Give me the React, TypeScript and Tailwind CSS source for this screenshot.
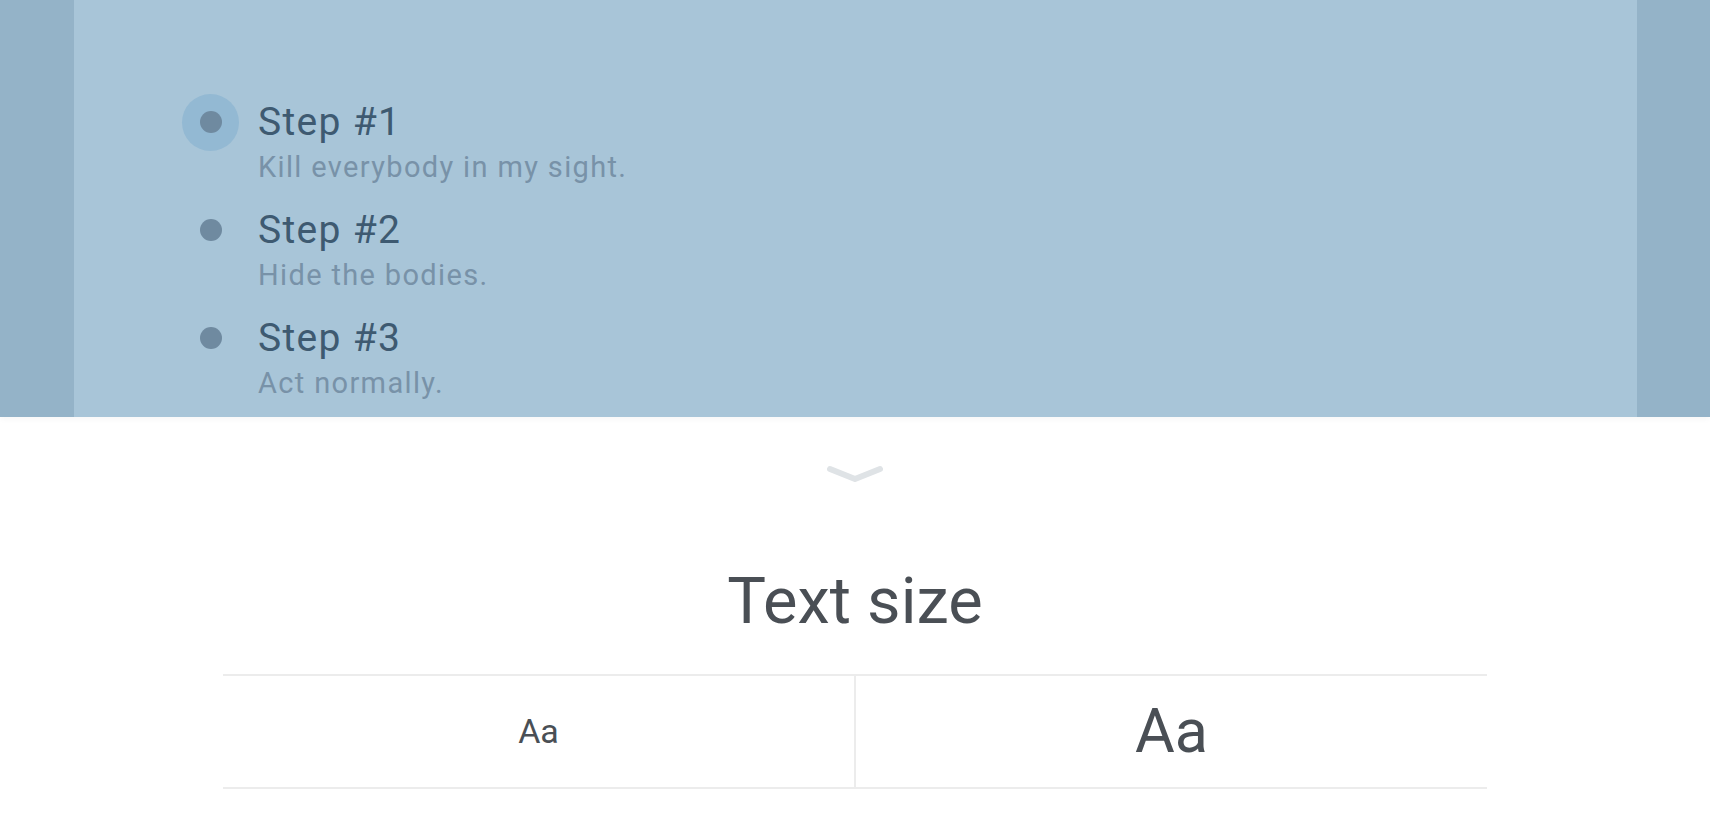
import React from "react";

const steps = [
  { title: "Step #1", sub: "Kill everybody in my sight.", active: true },
  { title: "Step #2", sub: "Hide the bodies.", active: false },
  { title: "Step #3", sub: "Act normally.", active: false },
];

export default function App() {
  return (
    <div
      className="w-full h-[821px] overflow-hidden flex flex-col bg-white"
      style={{ fontFamily: "Roboto, 'Noto Sans', sans-serif" }}
    >
      <div className="relative z-10 h-[417px] flex shrink-0 shadow-[0_2px_6px_rgba(0,0,0,0.04)]">
        <div className="w-[74px] bg-[#94b3c8]" />
        <div className="flex-1 bg-[#a8c5d8] pt-[100px] pl-[108px] flex flex-col gap-[24px]">
          {steps.map((s) => (
            <div key={s.title} className="flex items-start">
              <div className="w-[57px] h-[44px] flex items-center justify-center shrink-0">
                {s.active ? (
                  <div className="w-[57px] h-[57px] shrink-0 rounded-full bg-[#93b9d3] flex items-center justify-center">
                    <div className="w-[22px] h-[22px] rounded-full bg-[#6f8aa0]" />
                  </div>
                ) : (
                  <div className="w-[22px] h-[22px] rounded-full bg-[#6f8aa0]" />
                )}
              </div>
              <div className="ml-[19px] flex flex-col">
                <div className="text-[39px] leading-[44px] tracking-[1.3px] text-[#3e5a71]">{s.title}</div>
                <div className="mt-[6px] text-[29px] leading-[34px] tracking-[1.35px] text-[#7892a8]">{s.sub}</div>
              </div>
            </div>
          ))}
        </div>
        <div className="w-[73px] bg-[#94b3c8]" />
      </div>
      <div className="flex-1 flex flex-col items-center">
        <svg width="56" height="18" viewBox="0 0 56 18" className="mt-[48px]">
          <polyline
            points="3,4 28,14 53,4"
            fill="none"
            stroke="#dfe3e6"
            strokeWidth="6"
            strokeLinecap="round"
            strokeLinejoin="round"
          />
        </svg>
        <div className="mt-[80px] text-[65px] leading-[76px] text-[#4a4f55]">Text size</div>
        <div className="mt-[35px] w-[1264px] border-t-2 border-b-2 border-[#ececec] flex h-[115px]">
          <div className="flex-1 flex items-center justify-center text-[34px] text-[#4a4f55]">Aa</div>
          <div className="w-[2px] bg-[#ececec]" />
          <div className="flex-1 flex items-center justify-center text-[61px] text-[#4a4f55]">Aa</div>
        </div>
      </div>
    </div>
  );
}
